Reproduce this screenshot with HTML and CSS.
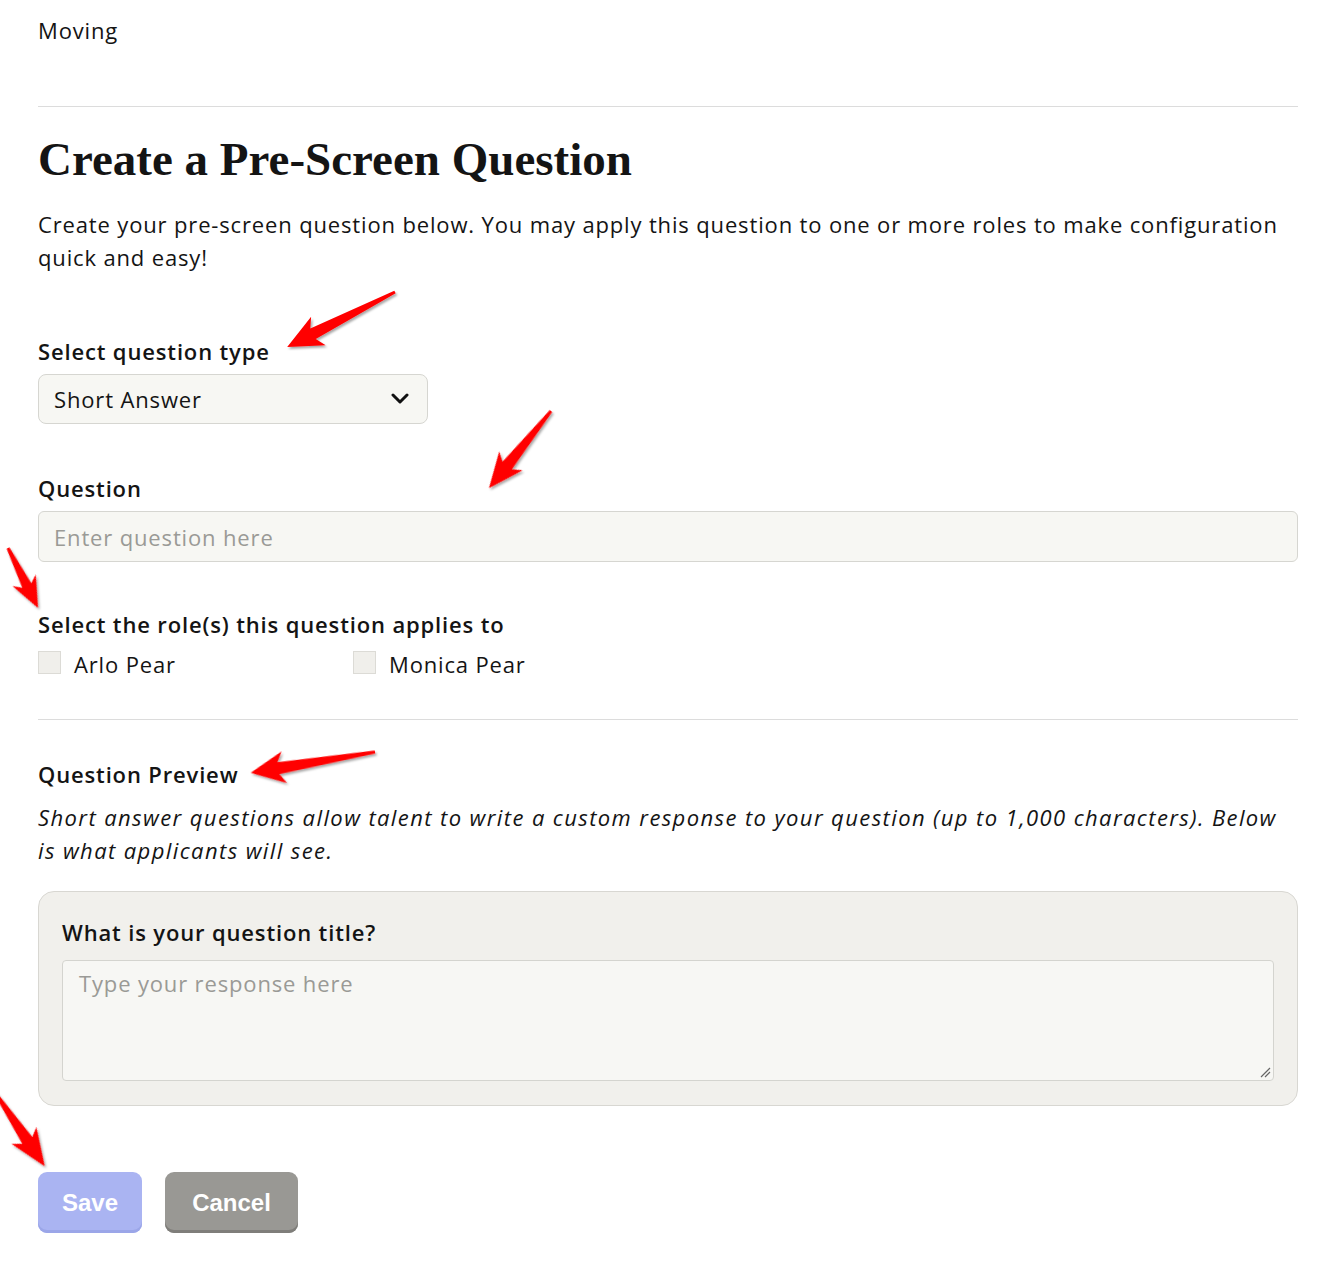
FILE: index.html
```html
<!DOCTYPE html>
<html lang="en">

<head>
    <meta charset="UTF-8">
    <meta name="viewport" content="width=device-width, initial-scale=1.0">
    <title>Create a Pre-Screen Question</title>
    <link rel="stylesheet" href="styles.css">
</head>

<body>
    <div class="page">
        <!-- top -->
        <div class="crumb">Moving</div>
        <hr class="rule">

        <h1 class="title">Create a Pre-Screen Question</h1>
        <p class="intro">Create your pre-screen question below. You may apply this question to one or more roles to make configuration quick and easy!</p>

        <!-- form -->
        <div class="field field-type">
            <label class="label">Select question type</label>
            <div class="select">
                <span>Short Answer</span>
                <svg class="chevron" width="20" height="12" viewBox="0 0 20 12">
                    <path d="M3 2 L10 9 L17 2" fill="none" stroke="#111" stroke-width="3" stroke-linecap="round" stroke-linejoin="round"/>
                </svg>
            </div>
        </div>

        <div class="field field-question">
            <label class="label">Question</label>
            <div class="input placeholder">Enter question here</div>
        </div>

        <div class="field field-roles">
            <label class="label">Select the role(s) this question applies to</label>
            <div class="roles">
                <div class="role"><span class="box"></span>Arlo Pear</div>
                <div class="role"><span class="box"></span>Monica Pear</div>
            </div>
        </div>

        <hr class="rule rule-mid">

        <!-- preview -->
        <div class="label preview-label">Question Preview</div>
        <p class="note">Short answer questions allow talent to write a custom response to your question (up to 1,000 characters). Below is what applicants will see.</p>

        <div class="preview">
            <div class="preview-title">What is your question title?</div>
            <div class="textarea">
                <span class="placeholder">Type your response here</span>
                <svg class="grip" width="12" height="12" viewBox="0 0 12 12">
                    <path d="M2 11 L11 2 M6 11 L11 6" stroke="#666" stroke-width="1.2"/>
                </svg>
            </div>
        </div>

        <div class="actions">
            <button class="btn btn-save">Save</button>
            <button class="btn btn-cancel">Cancel</button>
        </div>
    </div>

    <!-- annotation arrows -->
    <svg class="arrows" width="1344" height="1266" viewBox="0 0 1344 1266">
        <defs>
            <filter id="shadow" x="-20%" y="-20%" width="140%" height="140%">
                <feDropShadow dx="1.5" dy="2" stdDeviation="1.2" flood-color="#000" flood-opacity="0.35"/>
            </filter>
        </defs>
        <g fill="#ff0000" filter="url(#shadow)">
            <polygon transform="translate(395 292) rotate(153)" points="0,-1.5 92,-6 86,-16 121,0 86,16 92,6 0,1.5"/>
            <polygon transform="translate(551 411) rotate(128.8)" points="0,-1.5 70,-6 64,-15 99,0 64,15 70,6 0,1.5"/>
            <polygon transform="translate(8 548) rotate(63.4)" points="0,-1.5 42,-5 36,-13 67,0 36,13 42,5 0,1.5"/>
            <polygon transform="translate(375 752) rotate(170.5)" points="0,-1.5 98,-6 92,-16 126,0 92,16 98,6 0,1.5"/>
            <polygon transform="translate(-4 1094) rotate(56)" points="0,-1.5 56,-6 50,-15 87,0 50,15 56,6 0,1.5"/>
        </g>
    </svg>
</body>

</html>
```

FILE: styles.css
```css
/* base */
body {
    margin: 0;
    font-family: "Open Sans", "Liberation Sans", sans-serif;
    letter-spacing: 0.85px;
    color: #141414;
    background: #fff;
}

.page {
    padding: 17px 46px 40px 38px;
}

.crumb {
    font-size: 22px;
    line-height: 26px;
}

.rule {
    border: none;
    border-top: 1px solid #dcdcdc;
    margin: 63px 0 0 0;
}

.title {
    font-family: "Liberation Serif", "Times New Roman", serif;
    font-weight: bold;
    font-size: 47px;
    line-height: 52px;
    letter-spacing: 0;
    margin: 26px 0 0 0;
}

.intro {
    font-size: 22px;
    line-height: 33px;
    margin: 23px 0 0 0;
}

/* form fields */
.label {
    display: block;
    font-weight: 600;
    font-size: 22px;
    line-height: 28px;
}

.field-type {
    margin-top: 63px;
}

.field-question {
    margin-top: 50px;
}

.field-roles {
    margin-top: 48px;
}

.select {
    width: 390px;
    height: 50px;
    margin-top: 9px;
    box-sizing: border-box;
    display: flex;
    align-items: center;
    justify-content: space-between;
    padding: 0 17px 0 15px;
    background: #f7f7f3;
    border: 1px solid #d6d6d1;
    border-radius: 8px;
    font-size: 22px;
}

.input {
    height: 51px;
    margin-top: 9px;
    box-sizing: border-box;
    display: flex;
    align-items: center;
    padding: 0 15px;
    background: #f7f7f3;
    border: 1px solid #d6d6d1;
    border-radius: 6px;
    font-size: 22px;
}

.placeholder {
    color: #9a9a96;
}

.roles {
    display: flex;
    margin-top: 12px;
}

.role {
    display: flex;
    align-items: center;
    width: 315px;
    font-size: 22px;
    line-height: 28px;
}

.box {
    width: 23px;
    height: 23px;
    box-sizing: border-box;
    background: #f0efeb;
    border: 1px solid #dcdbd6;
    margin-right: 13px;
    margin-top: -4px;
}

.rule-mid {
    margin-top: 41px;
}

/* preview */
.preview-label {
    margin-top: 40px;
}

.note {
    font-style: italic;
    font-size: 22px;
    line-height: 33px;
    letter-spacing: 1.4px;
    margin: 13px 0 0 0;
}

.preview {
    margin-top: 24px;
    background: #f1f0ec;
    border: 1px solid #d8d7d2;
    border-radius: 16px;
    padding: 26px 23px 24px 23px;
}

.preview-title {
    font-weight: 600;
    font-size: 22px;
    line-height: 28px;
}

.textarea {
    position: relative;
    height: 121px;
    margin-top: 14px;
    box-sizing: border-box;
    background: #f7f7f4;
    border: 1px solid #d4d4cf;
    border-radius: 4px;
    padding: 7px 16px;
    font-size: 22px;
}

.grip {
    position: absolute;
    right: 2px;
    bottom: 2px;
}

/* buttons */
.actions {
    display: flex;
    gap: 23px;
    margin-top: 66px;
}

.btn {
    height: 61px;
    border: none;
    border-radius: 9px;
    font-family: "Liberation Sans", Arial, sans-serif;
    font-weight: bold;
    font-size: 24px;
    color: #fff;
    padding: 0 23px;
}

.btn-save {
    width: 104px;
    background: #aab4f2;
    box-shadow: inset 0 -3px 0 #9ba6e8;
}

.btn-cancel {
    width: 133px;
    background: #999894;
    box-shadow: inset 0 -3px 0 #7f7e7a;
}

.arrows {
    position: absolute;
    top: 0;
    left: 0;
    pointer-events: none;
}
```
